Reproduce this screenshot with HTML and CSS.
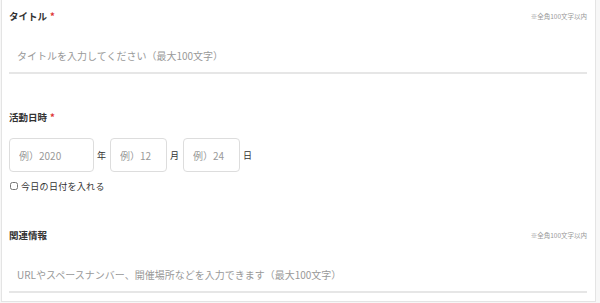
FILE: index.html
```html
<!DOCTYPE html>
<html lang="ja">
<head>
<meta charset="utf-8">
<link rel="stylesheet" href="styles.css">
</head>
<body>
<div class="card">
  <div class="field">
    <div class="head">
      <span class="label">タイトル<span class="req">*</span></span>
      <span class="note">※全角100文字以内</span>
    </div>
    <input class="line" type="text" placeholder="タイトルを入力してください（最大100文字）">
  </div>
  <div class="field date-field">
    <div class="head">
      <span class="label">活動日時<span class="req">*</span></span>
    </div>
    <div class="dates">
      <input class="box box-y" type="text" placeholder="例）2020"><span class="unit">年</span>
      <input class="box box-m" type="text" placeholder="例）12"><span class="unit">月</span>
      <input class="box box-m" type="text" placeholder="例）24"><span class="unit">日</span>
    </div>
    <label class="today"><input type="checkbox" class="chk">今日の日付を入れる</label>
  </div>
  <div class="field info-field">
    <div class="head">
      <span class="label">関連情報</span>
      <span class="note">※全角100文字以内</span>
    </div>
    <input class="line" type="text" placeholder="URLやスペースナンバー、開催場所などを入力できます（最大100文字）">
  </div>
</div>
</body>
</html>
```
FILE: styles.css
```css
* { box-sizing: border-box; }
html, body { margin: 0; padding: 0; background: #f7f7f7; }
body {
  width: 600px; height: 303px; overflow: hidden;
  font-family: "Noto Sans CJK JP", "Noto Sans", sans-serif;
  color: #333;
}
.card {
  margin-left: 1px;
  margin-top: -1px;
  width: 595px;
  height: 303px;
  background: #fff;
  border: 1px solid #e4e4e4;
  padding: 0 8px 0 7px;
}
.field { display: flex; flex-direction: column; }
.head {
  display: flex; justify-content: space-between; align-items: center;
  height: 16px; margin-top: 8px;
}
.label { font-size: 9.5px; font-weight: bold; color: #333; }
.req { color: #d33; margin-left: 3px; }
.note { font-size: 6.5px; color: #999; }
.line {
  border: none; border-bottom: 2px solid #e6e6e6; outline: none;
  height: 35px; margin-top: 15px; padding: 0 0 0 8px;
  font-family: inherit; font-size: 10px; width: 100%;
  background: transparent;
}
.line::placeholder { color: #999; }
.date-field .head { margin-top: 35px; }
.dates { display: flex; align-items: center; margin-top: 13px; }
.box {
  height: 34px; border: 1px solid #ddd; border-radius: 4px; outline: none;
  padding: 0 0 0 9px; font-family: "Noto Sans CJK JP", sans-serif; font-size: 10px;
  background: #fff;
}
.box::placeholder { color: #999; }
.box-y { width: 85px; }
.box-m { width: 57px; }
.unit { font-size: 9px; color: #333; margin: 0 4px 0 3px; }
.today { display: flex; align-items: center; height: 12px; font-size: 9px; margin-top: 8px; color: #333; letter-spacing: 0.3px; }
.chk { width: 8px; height: 8px; margin: 0 3px 0 1px; }
.info-field .head { margin-top: 35px; }
.info-field .line { margin-top: 15px; }
```
